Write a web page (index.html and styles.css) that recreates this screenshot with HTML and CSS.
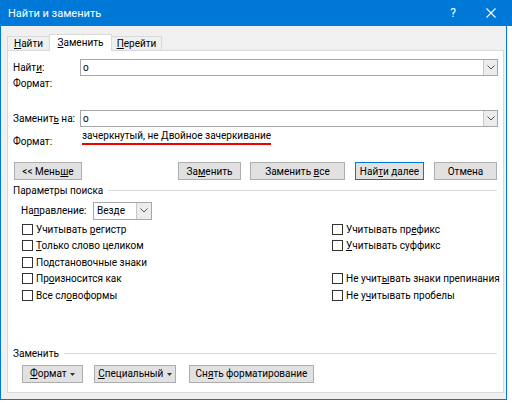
FILE: index.html
```html
<!DOCTYPE html>
<html lang="ru">
<head>
<meta charset="utf-8">
<title>Найти и заменить</title>
<link rel="stylesheet" href="styles.css">
</head>
<body>
<div class="titlebar">
  <span class="title">Найти и заменить</span>
  <span class="help">?</span>
  <svg class="close" width="10" height="10" viewBox="0 0 10 10"><path d="M0.5 0.5 L9.5 9.5 M9.5 0.5 L0.5 9.5" stroke="#fff" stroke-width="1.1" fill="none"/></svg>
</div>
<div class="window">
  <div class="tabs">
    <div class="tab tab-find"><u>Н</u>айти</div>
    <div class="tab tab-replace active"><u>З</u>аменить</div>
    <div class="tab tab-goto"><u>П</u>ерейти</div>
  </div>
  <div class="panel">
    <div class="field">
      <span class="label">Найт<u>и</u>:</span>
      <div class="combo">
        <span class="value">о</span>
        <span class="drop"><svg width="8" height="5" viewBox="0 0 8 5"><path d="M0.5 0.5 L4 4 L7.5 0.5" stroke="#555" fill="none"/></svg></span>
      </div>
    </div>
    <div class="format-row"><span class="label">Формат:</span></div>
    <div class="field field-second">
      <span class="label">Заменит<u>ь</u> на:</span>
      <div class="combo">
        <span class="value">о</span>
        <span class="drop"><svg width="8" height="5" viewBox="0 0 8 5"><path d="M0.5 0.5 L4 4 L7.5 0.5" stroke="#555" fill="none"/></svg></span>
      </div>
    </div>
    <div class="format-row format-row-2">
      <span class="label label-low">Формат:</span>
      <span class="fmt">зачеркнутый, не Двойное зачеркивание</span>
    </div>
    <div class="buttons">
      <button class="btn btn-less">&lt;&lt; Мень<u>ш</u>е</button>
      <div class="btn-group">
        <button class="btn btn-replace">За<u>м</u>енить</button>
        <button class="btn btn-replace-all">Заменить <u>в</u>се</button>
        <button class="btn btn-next default">Най<u>т</u>и далее</button>
        <button class="btn btn-cancel">Отмена</button>
      </div>
    </div>
    <div class="group-title">Параметры поиска</div>
    <div class="direction">
      <span class="dir-label">На<u>п</u>равление:</span>
      <div class="select">
        <span class="value">Везде</span>
        <span class="select-drop"><svg width="8" height="5" viewBox="0 0 8 5"><path d="M0.5 0.5 L4 4 L7.5 0.5" stroke="#555" fill="none"/></svg></span>
      </div>
    </div>
    <div class="options">
      <label class="opt"><span class="box"></span><span class="txt">Учитывать <u>р</u>егистр</span></label>
      <label class="opt"><span class="box"></span><span class="txt">Учитывать пр<u>е</u>фикс</span></label>
      <label class="opt"><span class="box"></span><span class="txt"><u>Т</u>олько слово целиком</span></label>
      <label class="opt"><span class="box"></span><span class="txt"><u>У</u>читывать суффикс</span></label>
      <label class="opt"><span class="box"></span><span class="txt">Подстановочные знаки</span></label>
      <span class="opt-empty"></span>
      <label class="opt"><span class="box"></span><span class="txt">Пр<u>о</u>износится как</span></label>
      <label class="opt"><span class="box"></span><span class="txt">Не учит<u>ы</u>вать знаки препинания</span></label>
      <label class="opt"><span class="box"></span><span class="txt">Все сл<u>о</u>воформы</span></label>
      <label class="opt"><span class="box"></span><span class="txt">Не у<u>ч</u>итывать пробелы</span></label>
    </div>
    <div class="group-title group-replace">Заменить</div>
    <div class="bottom-buttons">
      <button class="btn btn-format"><u>Ф</u>ормат <svg class="tri" width="5" height="3" viewBox="0 0 5 3"><path d="M0 0 H5 L2.5 3 Z" fill="#333"/></svg></button>
      <button class="btn btn-special"><u>С</u>пециальный <svg class="tri" width="5" height="3" viewBox="0 0 5 3"><path d="M0 0 H5 L2.5 3 Z" fill="#333"/></svg></button>
      <button class="btn btn-clear">Сн<u>я</u>ть форматирование</button>
    </div>
  </div>
</div>
</body>
</html>
```

FILE: styles.css
```css
* { box-sizing: border-box; }
html, body { margin: 0; padding: 0; }
body {
  width: 512px;
  height: 403px;
  overflow: hidden;
  background: #ffffff;
  font-family: Roboto, "Noto Sans", sans-serif;
  font-size: 10px;
  color: #000;
}
u { text-decoration: underline; text-underline-offset: 1px; text-decoration-thickness: 1px; }

.titlebar {
  height: 26px;
  background: #0078d7;
  color: #fff;
  display: flex;
  align-items: center;
  padding-left: 8px;
}
.title { flex: 1; font-size: 11px; }
.help { width: 10px; text-align: center; font-size: 12px; margin-right: 28px; }
.close { display: block; margin-right: 16px; }

.window {
  width: 507px;
  height: 374px;
  border: 1px solid #0078d7;
  border-top: 0;
  background: #f0f0f0;
  padding: 8px 2px 0 6px;
}

.tabs {
  display: flex;
  align-items: flex-end;
  height: 16px;
}
.tab {
  height: 14px;
  line-height: 13px;
  border: 1px solid #d9d9d9;
  border-bottom: 0;
  background: #f0f0f0;
  text-align: center;
}
.tab-find { width: 43px; margin-right: -1px; }
.tab-replace { width: 63px; }
.tab-goto { width: 51px; margin-left: -1px; }
.tab.active {
  height: 17px;
  line-height: 16px;
  background: #fff;
  margin-bottom: -1px;
  position: relative;
  z-index: 1;
}

.panel {
  width: 497px;
  height: 343px;
  border: 1px solid #d9d9d9;
  background: #fff;
  padding: 8px 5px 0 5px;
}

.field {
  display: grid;
  grid-template-columns: 67px 418px;
  height: 17px;
  align-items: center;
}
.label { white-space: nowrap; }
.field-second { margin-top: 18px; }
.combo {
  height: 17px;
  border: 1px solid #a8a8a8;
  display: flex;
  align-items: center;
  justify-content: space-between;
  padding-left: 2px;
}
.value { line-height: 14px; }
.drop {
  width: 14px;
  height: 15px;
  border-left: 1px solid #c8c8c8;
  background: #ececec;
  display: flex;
  align-items: center;
  justify-content: center;
}

.format-row { height: 16px; line-height: 16px; }
.format-row-2 {
  display: flex;
  height: 22px;
  line-height: 15px;
}
.format-row-2 .label-low { width: 69px; padding-top: 7px; }
.fmt {
  display: inline-block;
  align-self: flex-start;
  padding-top: 1px;
  height: 18px;
  border-bottom: 2px solid #ee0000;
}

.buttons {
  display: flex;
  margin-top: 13px;
  height: 18px;
  padding-left: 1px;
}
.btn {
  height: 18px;
  border: 1px solid #adadad;
  background: #e1e1e1;
  font-family: inherit;
  font-size: inherit;
  color: #000;
  padding: 0;
  line-height: 15px;
  text-align: center;
  white-space: nowrap;
}
.btn.default { border-color: #0078d7; }
.btn-less { width: 68px; }
.btn-group { display: flex; gap: 10px; margin-left: auto; margin-right: 1px; }
.btn-replace { width: 63px; }
.btn-replace-all { width: 95px; margin-left: -1px; }
.btn-next { width: 69px; }
.btn-cancel { width: 63px; }

.group-title {
  display: flex;
  align-items: center;
  margin-top: 3px;
  height: 14px;
  margin-right: 1px;
}
.group-title::after {
  content: "";
  flex: 1;
  border-top: 1px solid #dcdcdc;
  margin-left: 5px;
}

.direction {
  display: flex;
  align-items: center;
  margin-top: 5px;
  height: 17px;
  padding-left: 8px;
}
.dir-label { width: 72px; }
.select {
  width: 59px;
  height: 18px;
  border: 1px solid #a8a8a8;
  display: flex;
  align-items: center;
  justify-content: space-between;
  padding-left: 3px;
}
.select-drop {
  width: 15px;
  height: 16px;
  border-left: 1px solid #c8c8c8;
  background: #ececec;
  display: flex;
  align-items: center;
  justify-content: center;
}

.options {
  display: grid;
  grid-template-columns: 310px 1fr;
  grid-auto-rows: 16.5px;
  margin-top: 2px;
  padding-left: 9px;
}
.opt {
  display: flex;
  align-items: center;
  gap: 3px;
  white-space: nowrap;
}
.box {
  width: 11px;
  height: 11px;
  border: 1px solid #333;
  background: #fff;
  flex: none;
}

.group-replace { margin-top: 43px; }

.bottom-buttons {
  display: flex;
  margin-top: 4px;
  padding-left: 9px;
}
.btn-format { width: 61px; }
.btn-special { width: 82px; margin-left: 11px; }
.btn-clear { width: 125px; margin-left: 13px; }
.tri { vertical-align: middle; margin-left: 1px; }
```
